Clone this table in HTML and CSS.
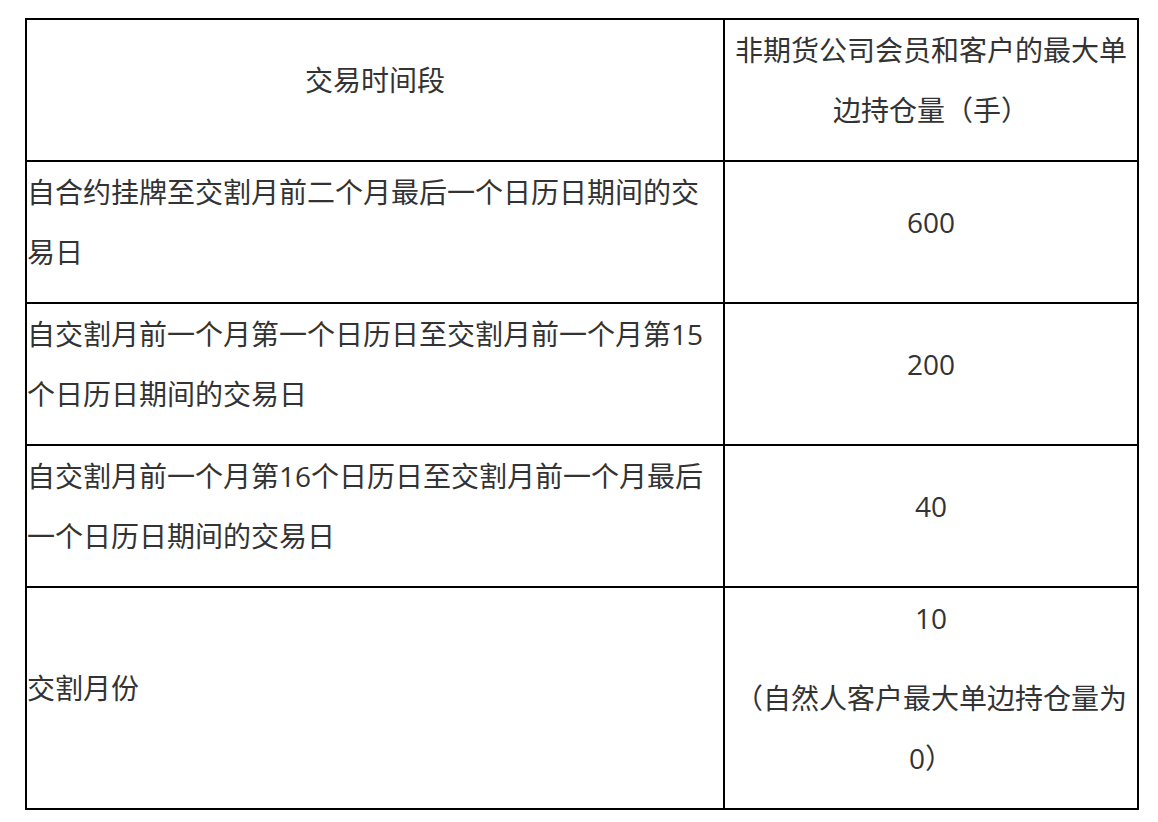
FILE: index.html
```html
<!DOCTYPE html>
<html lang="zh-CN">
<head>
<meta charset="utf-8">
<title>持仓限额</title>
<link rel="stylesheet" href="styles.css">
</head>
<body>
<table class="limits">
  <tr class="row">
    <td class="cell cell-left cell-center"><p class="para">交易时间段</p></td>
    <td class="cell cell-right"><p class="para">非期货公司会员和客户的最大单边持仓量（手）</p></td>
  </tr>
  <tr class="row">
    <td class="cell cell-left"><p class="para">自合约挂牌至交割月前二个月最后一个日历日期间的交易日</p></td>
    <td class="cell cell-right"><p class="para">600</p></td>
  </tr>
  <tr class="row">
    <td class="cell cell-left"><p class="para">自交割月前一个月第一个日历日至交割月前一个月第15个日历日期间的交易日</p></td>
    <td class="cell cell-right"><p class="para">200</p></td>
  </tr>
  <tr class="row">
    <td class="cell cell-left"><p class="para">自交割月前一个月第16个日历日至交割月前一个月最后一个日历日期间的交易日</p></td>
    <td class="cell cell-right"><p class="para">40</p></td>
  </tr>
  <tr class="row">
    <td class="cell cell-left"><p class="para">交割月份</p></td>
    <td class="cell cell-right"><p class="para">10</p><p class="para">（自然人客户最大单边持仓量为0）</p></td>
  </tr>
</table>
</body>
</html>
```

FILE: styles.css
```css
html, body {
  margin: 0;
  padding: 0;
  background: #ffffff;
}

body {
  font-family: "Open Sans", "Noto Sans CJK SC", sans-serif;
  font-size: 28px;
  color: #333333;
}

.limits {
  margin: 18px 0 0 25px;
  width: 1114px;
  border-collapse: separate;
  border-spacing: 0;
  border-top: 2px solid #000000;
  border-left: 2px solid #000000;
  table-layout: fixed;
}

.cell {
  border-right: 2px solid #000000;
  border-bottom: 2px solid #000000;
  padding: 0;
  vertical-align: middle;
  height: 140px;
}

.cell-left {
  width: 696px;
  text-align: left;
}

.cell-right {
  text-align: center;
}

.cell-center {
  text-align: center;
}

.para {
  margin: 0 0 20px 0;
  line-height: 60px;
}
```
